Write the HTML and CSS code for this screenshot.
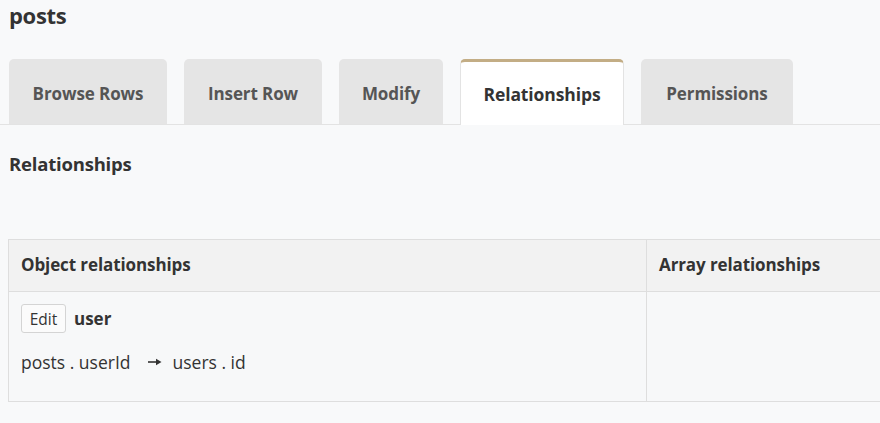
FILE: index.html
```html
<!DOCTYPE html>
<html>
<head>
<meta charset="utf-8">
<link rel="stylesheet" href="styles.css">
</head>
<body>
<div class="page">
  <h2 class="title">posts</h2>
  <div class="tabbar">
    <div class="tab">Browse Rows</div>
    <div class="tab">Insert Row</div>
    <div class="tab">Modify</div>
    <div class="tab active">Relationships</div>
    <div class="tab">Permissions</div>
  </div>
  <h4 class="section-title">Relationships</h4>
  <table class="rel-table">
    <thead>
      <tr>
        <th class="col-obj">Object relationships</th>
        <th class="col-arr">Array relationships</th>
      </tr>
    </thead>
    <tbody>
      <tr>
        <td class="col-obj">
          <div class="rel-head"><button class="edit-btn">Edit</button><b class="rel-name">user</b></div>
          <div class="rel-map"><span>posts . userId</span><svg class="arrow" width="14" height="8" viewBox="0 0 14 8"><path d="M0 4H9" stroke="#333" stroke-width="1.6"/><path d="M8 0.8L13.5 4L8 7.2Z" fill="#333"/></svg><span>users . id</span></div>
        </td>
        <td class="col-arr"></td>
      </tr>
    </tbody>
  </table>
</div>
</body>
</html>
```
FILE: styles.css
```css
html, body {
  margin: 0;
  padding: 0;
  background: #f8f9fa;
  overflow: hidden;
}
body {
  font-family: "Open Sans", "Noto Sans", sans-serif;
  color: #333;
}
.page {
  width: 880px;
  height: 423px;
  overflow: hidden;
}
.title {
  margin: 0 0 0 9px;
  font-size: 22px;
  line-height: 30px;
  font-weight: 700;
  color: #333;
  letter-spacing: -0.3px;
}
.tabbar {
  margin-top: 29px;
  display: flex;
  gap: 17px;
  padding-left: 9px;
  border-bottom: 1px solid #e3e3e3;
  height: 65px;
}
.tab {
  box-sizing: border-box;
  height: 65px;
  padding: 3px 0 0 0;
  display: flex;
  align-items: center;
  justify-content: center;
  background: #e5e5e5;
  border-radius: 5px 5px 0 0;
  font-size: 17px;
  font-weight: 700;
  color: #555;
  letter-spacing: -0.1px;
}
.tab:nth-child(1) { width: 158px; }
.tab:nth-child(2) { width: 138px; }
.tab:nth-child(3) { width: 104px; }
.tab:nth-child(4) { width: 164px; }
.tab:nth-child(5) { width: 152px; }
.tab.active {
  background: #fff;
  color: #333;
  border: 1px solid #e3e3e3;
  border-top: 3px solid #c3ad85;
  border-bottom: none;
  height: 66px;
  padding-top: 0;
  font-size: 17.5px;
}
.section-title {
  margin: 27px 0 0 9px;
  font-size: 18.5px;
  line-height: 24px;
  font-weight: 700;
  color: #333;
  letter-spacing: -0.2px;
}
.rel-table {
  margin: 63px 0 0 8px;
  border-collapse: collapse;
  width: 1000px;
  table-layout: fixed;
}
.rel-table th, .rel-table td {
  border: 1px solid #dedede;
  text-align: left;
  vertical-align: top;
}
.rel-table th {
  background: #f2f2f2;
  height: 52px;
  box-sizing: border-box;
  padding: 0 12px 2px 12px;
  vertical-align: middle;
  font-size: 17px;
  font-weight: 700;
  color: #333;
  letter-spacing: -0.1px;
}
.rel-table th.col-obj { width: 638px; }
.rel-table td {
  height: 110px;
  box-sizing: border-box;
  padding: 12px 12px 0 12px;
  background: #f7f8f9;
}
.rel-head {
  display: flex;
  align-items: center;
  gap: 8px;
}
.edit-btn {
  font-family: inherit;
  font-size: 15.5px;
  color: #333;
  background: #fbfbfb;
  border: 1px solid #d4d4d4;
  border-radius: 3px;
  height: 29px;
  width: 45px;
  padding: 0;
}
.rel-name {
  font-size: 17px;
  font-weight: 700;
  color: #333;
}
.rel-map {
  margin-top: 17px;
  font-size: 17.5px;
  color: #333;
  display: flex;
  align-items: center;
  white-space: pre;
}
.arrow {
  margin: 0 11px 0 17px;
}
```
